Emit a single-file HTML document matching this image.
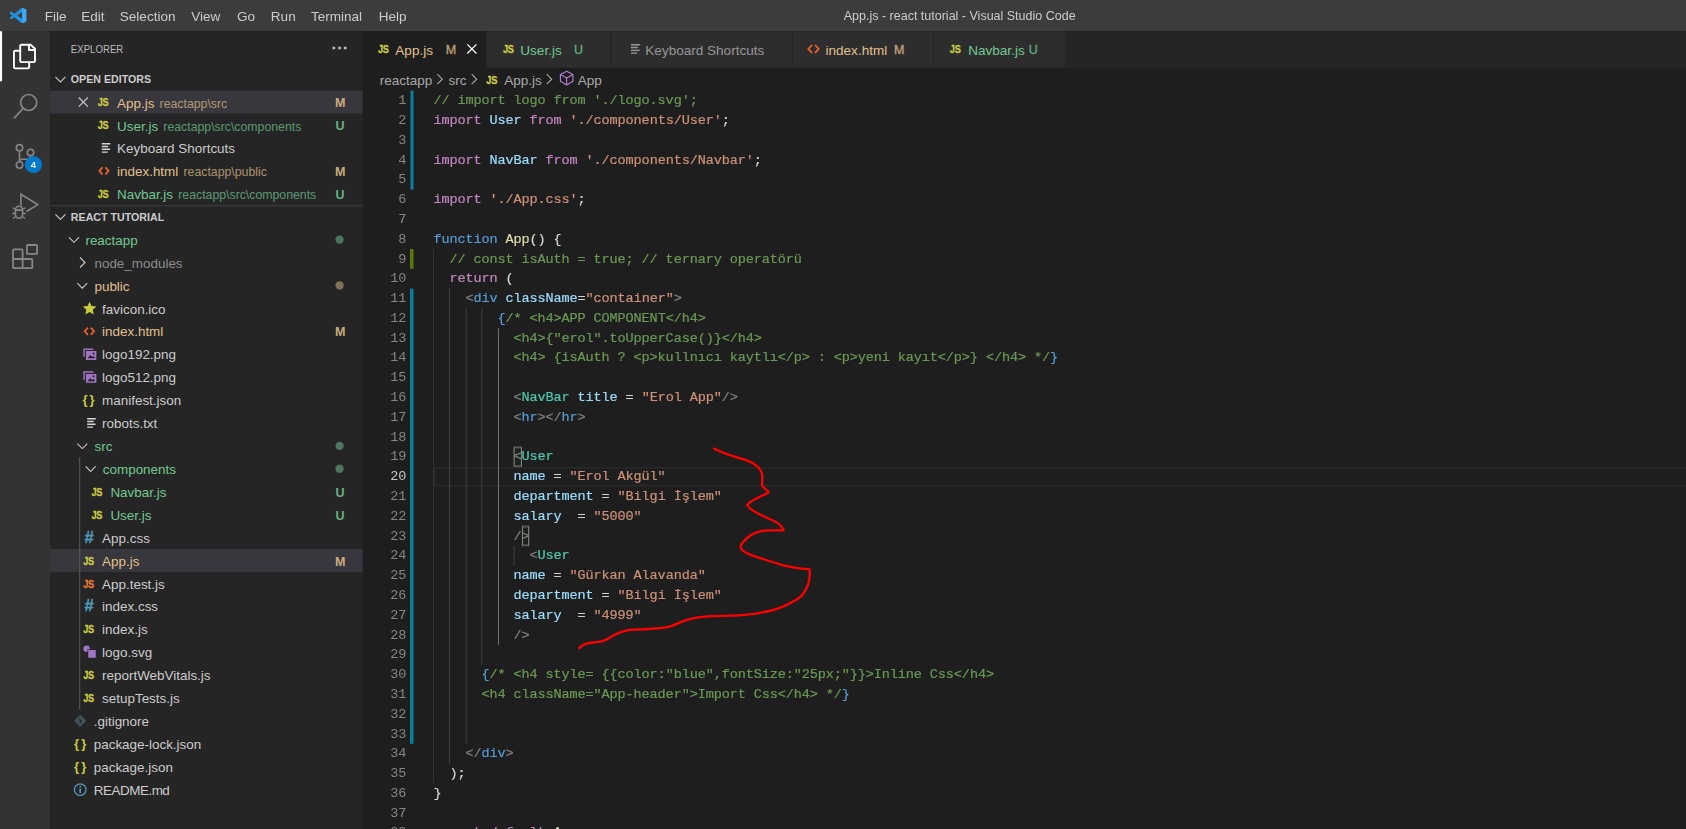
<!DOCTYPE html>
<html><head><meta charset="utf-8"><title>App.js - react tutorial - Visual Studio Code</title>
<style>
html,body{margin:0;padding:0;background:#1e1e1e;overflow:hidden;}
body{width:1686px;height:829px;position:relative;font-family:"Liberation Sans",sans-serif;}
#root{position:absolute;left:0;top:0;width:1619px;height:796px;transform:scale(1.0416667);transform-origin:0 0;overflow:visible;font-size:13px;color:#ccc;}
.ab{position:absolute;white-space:pre;}
#title{left:0;top:0;width:1700px;height:30px;background:#3c3c3c;}
.mi{top:.5px;height:30px;line-height:30px;font-size:13px;color:#cccccc;}
#act{left:0;top:30px;width:48px;height:800px;background:#333333;}
#side{left:48px;top:30px;width:300.500px;height:800px;background:#252526;overflow:hidden;}
#ed{left:348.500px;top:30px;width:1300px;height:800px;background:#1e1e1e;}
#tabs{left:0;top:0;width:1300px;height:35px;background:#252526;}
.tab{top:0;height:35px;background:#2d2d2d;box-sizing:border-box;border-right:1px solid #252526;}
.tab.on{background:#1e1e1e;}
.tl{top:1px;height:35px;line-height:35px;font-size:13px;}
.dec{opacity:.8;font-size:12px;-webkit-text-stroke:.3px}
.sbtitle{height:35px;line-height:35px;font-size:11px;color:#bbbbbb;transform:scaleX(.84);transform-origin:0 50%;}
.dots{font-size:16px;line-height:16px;color:#c5c5c5;font-weight:bold}
.phead{height:22px;line-height:22px;font-size:11px;font-weight:bold;color:#cccccc;transform:scaleX(.93);transform-origin:0 50%;}
.row{height:22px;line-height:22px;font-size:12.900px;padding-top:1.200px}
.desc{font-size:11.800px;opacity:.7;margin-left:5px;}
.badge{width:20px;text-align:center;height:22px;line-height:22px;font-size:12px;font-weight:bold;opacity:.85;padding-top:1.200px}
.sel{background:#37373d;}
.jsic{width:16px;height:16px;line-height:17px;text-align:center;font-size:10.800px;font-weight:bold;letter-spacing:-.3px;transform:scaleX(.82);-webkit-text-stroke:.3px;}
.brace{width:18px;height:18px;line-height:18px;text-align:center;font-size:12.500px;font-weight:bold;letter-spacing:2px}
.hash{width:16px;height:18px;line-height:18px;text-align:center;font-size:16px;font-weight:bold;-webkit-text-stroke:.3px;}
#bc{left:0;top:36.700px;width:1300px;height:22px;line-height:22px;font-size:13px;color:#a9a9a9;}
#code{left:0;top:57px;width:1300px;height:760px;font-family:"Liberation Mono",monospace;}
.ln{left:0;width:41.500px;text-align:right;height:19px;line-height:19px;font-size:13px;color:#858585;letter-spacing:-.1px}
.ln.act{color:#c6c6c6;}
.cl{left:67.600px;height:19px;line-height:19px;font-size:13px;letter-spacing:-.115px;color:#d4d4d4;-webkit-text-stroke:.2px;}
.cm{color:#6a9955}.kc{color:#c586c0}.kw{color:#569cd6}.v{color:#9cdcfe}.s{color:#ce9178}.f{color:#dcdcaa}.p{color:#808080}.t{color:#569cd6}.ct{color:#4ec9b0}.d{color:#d4d4d4}
.bm{box-sizing:border-box;border:1px solid #888;background:rgba(0,100,0,.1);}
</style></head><body>
<div id="root">
 <div id="title" class="ab">
  <svg class="ab" style="left:9.300px;top:6.700px" width="16.500" height="15.700" viewBox="0 0 100 100" preserveAspectRatio="none"><path d="M74 100 1 36 10 25 78 73z" fill="#1e98ea"/><path d="M74 1 1 64 9 75 78 27z" fill="#2590d8"/><path d="M74 1 99 14V86L74 100z" fill="#3daaf7"/></svg>
  <div class="ab mi" style="left:43px">File</div>
  <div class="ab mi" style="left:78px">Edit</div>
  <div class="ab mi" style="left:115px">Selection</div>
  <div class="ab mi" style="left:183.500px">View</div>
  <div class="ab mi" style="left:227.500px">Go</div>
  <div class="ab mi" style="left:260px">Run</div>
  <div class="ab mi" style="left:298.500px">Terminal</div>
  <div class="ab mi" style="left:363.500px">Help</div>
  <div class="ab mi" style="left:810px;top:-.5px;font-size:12px">App.js - react tutorial - Visual Studio Code</div>
 </div>
 <div id="act" class="ab">
  <div class="ab" style="left:0;top:0;width:2px;height:48px;background:#fff"></div>
  </div>
 <div id="side" class="ab">
<div class="ab sbtitle" style="left:20px;top:0;">EXPLORER</div>
<div class="ab dots" style="left:270px;top:8px;">&#8943;</div>
<svg class="ab" style="left:2.3000000000000007px;top:37.7px" width="16" height="16" viewBox="0 0 16 16"><path d="M3.2 5.8 8 10.6 12.8 5.8" fill="none" stroke="#c5c5c5" stroke-width="1.1"/></svg>
<div class="ab phead" style="left:20px;top:35px;">OPEN EDITORS</div>
<div class="ab sel" style="left:0;top:57px;width:300px;height:22px"></div>
<svg class="ab" style="left:24px;top:60px" width="16" height="16" viewBox="0 0 16 16"><path d="M3.6 3.6 12.4 12.4M12.4 3.6 3.6 12.4" fill="none" stroke="#c5c5c5" stroke-width="1.15"/></svg>
<span class="ab jsic" style="left:43.4px;top:60px;color:#cbcb41">JS</span>
<div class="ab row" style="left:64.400px;top:58px;color:#e2c08d">App.js<span class="desc">reactapp\src</span></div>
<div class="ab badge" style="left:268.500px;top:57px;color:#e2c08d">M</div>
<span class="ab jsic" style="left:43.4px;top:82px;color:#cbcb41">JS</span>
<div class="ab row" style="left:64.400px;top:79.5px;color:#73c991">User.js<span class="desc">reactapp\src\components</span></div>
<div class="ab badge" style="left:268.500px;top:79px;color:#73c991">U</div>
<svg class="ab" style="left:42.5px;top:104px" width="16" height="16" viewBox="0 0 16 16"><path d="M6.700 4h8.300M6.700 6.670h6.200M6.700 9.330h8M6.700 12h5.600" fill="none" stroke="#d4d7d6" stroke-width="1.350"/></svg>
<div class="ab row" style="left:64.400px;top:101px;color:#cccccc">Keyboard Shortcuts</div>
<svg class="ab" style="left:43.3px;top:126px" width="16" height="16" viewBox="0 0 16 16"><path d="M7.400 4.600 4.400 8l3 3.400M10.200 4.600 13.200 8l-3 3.400" fill="none" stroke="#e8602c" stroke-width="1.800"/></svg>
<div class="ab row" style="left:64.400px;top:123px;color:#e2c08d">index.html<span class="desc">reactapp\public</span></div>
<div class="ab badge" style="left:268.500px;top:123px;color:#e2c08d">M</div>
<span class="ab jsic" style="left:43.4px;top:148px;color:#cbcb41">JS</span>
<div class="ab row" style="left:64.400px;top:145px;color:#73c991">Navbar.js<span class="desc">reactapp\src\components</span></div>
<div class="ab badge" style="left:268.500px;top:145px;color:#73c991">U</div>
<div class="ab" style="left:0;top:167px;width:300px;height:1px;background:#3f3f42"></div>
<svg class="ab" style="left:2.3000000000000007px;top:169.7px" width="16" height="16" viewBox="0 0 16 16"><path d="M3.2 5.8 8 10.6 12.8 5.8" fill="none" stroke="#c5c5c5" stroke-width="1.1"/></svg>
<div class="ab phead" style="left:20px;top:167px;">REACT TUTORIAL</div>
<svg class="ab" style="left:15.3px;top:192px" width="16" height="16" viewBox="0 0 16 16"><path d="M3.2 5.8 8 10.6 12.8 5.8" fill="none" stroke="#c5c5c5" stroke-width="1.1"/></svg>
<div class="ab row" style="left:34px;top:189px;color:#73c991">reactapp</div>
<div class="ab" style="left:274.300px;top:195.8px;width:8.200px;height:8.200px;border-radius:50%;background:#73c991;opacity:.5"></div>
<svg class="ab" style="left:22.6px;top:214px" width="16" height="16" viewBox="0 0 16 16"><path d="M5.8 3.2 10.6 8 5.8 12.8" fill="none" stroke="#c5c5c5" stroke-width="1.1"/></svg>
<div class="ab row" style="left:42.7px;top:211px;color:#8c8c8c">node_modules</div>
<svg class="ab" style="left:23.3px;top:236px" width="16" height="16" viewBox="0 0 16 16"><path d="M3.2 5.8 8 10.6 12.8 5.8" fill="none" stroke="#c5c5c5" stroke-width="1.1"/></svg>
<div class="ab row" style="left:42.7px;top:233px;color:#e2c08d">public</div>
<div class="ab" style="left:274.300px;top:239.8px;width:8.200px;height:8.200px;border-radius:50%;background:#e2c08d;opacity:.5"></div>
<svg class="ab" style="left:29.799999999999997px;top:258px" width="16" height="16" viewBox="0 0 16 16"><path d="M8 1.6l1.9 4.1 4.5.5-3.3 3.1.9 4.5L8 11.5l-4 2.3.9-4.5L1.600 6.2l4.5-.5z" fill="#cbcb41"/></svg>
<div class="ab row" style="left:50px;top:255px;color:#cccccc">favicon.ico</div>
<svg class="ab" style="left:29px;top:280px" width="16" height="16" viewBox="0 0 16 16"><path d="M7.400 4.600 4.400 8l3 3.400M10.200 4.600 13.200 8l-3 3.400" fill="none" stroke="#e8602c" stroke-width="1.800"/></svg>
<div class="ab row" style="left:50px;top:277px;color:#e2c08d">index.html</div>
<div class="ab badge" style="left:268.500px;top:277px;color:#e2c08d">M</div>
<svg class="ab" style="left:29.7px;top:302px" width="16" height="16" viewBox="0 0 16 16"><path d="M2 2.5h9.5v1.4H3.4v6.6H2z" fill="#a074c4"/><path d="M4.5 5h10v8.500h-10z" fill="#a074c4"/><path d="M6 12l2.600-3.200 1.800 2 1.300-1.200 1.600 2.400z" fill="#252526"/><circle cx="11.800" cy="7.300" r="1" fill="#252526"/></svg>
<div class="ab row" style="left:50px;top:299px;color:#cccccc">logo192.png</div>
<svg class="ab" style="left:29.7px;top:324px" width="16" height="16" viewBox="0 0 16 16"><path d="M2 2.5h9.5v1.4H3.4v6.6H2z" fill="#a074c4"/><path d="M4.5 5h10v8.500h-10z" fill="#a074c4"/><path d="M6 12l2.600-3.200 1.800 2 1.300-1.200 1.600 2.400z" fill="#252526"/><circle cx="11.800" cy="7.300" r="1" fill="#252526"/></svg>
<div class="ab row" style="left:50px;top:321px;color:#cccccc">logo512.png</div>
<span class="ab brace" style="left:29px;top:344.5px;color:#cbcb41">{}</span>
<div class="ab row" style="left:50px;top:343px;color:#cccccc">manifest.json</div>
<svg class="ab" style="left:29px;top:368px" width="16" height="16" viewBox="0 0 16 16"><path d="M6.700 4h8.300M6.700 6.670h6.200M6.700 9.330h8M6.700 12h5.600" fill="none" stroke="#d4d7d6" stroke-width="1.350"/></svg>
<div class="ab row" style="left:50px;top:365px;color:#cccccc">robots.txt</div>
<svg class="ab" style="left:23.3px;top:390px" width="16" height="16" viewBox="0 0 16 16"><path d="M3.2 5.8 8 10.6 12.8 5.8" fill="none" stroke="#c5c5c5" stroke-width="1.1"/></svg>
<div class="ab row" style="left:42.7px;top:387px;color:#73c991">src</div>
<div class="ab" style="left:274.300px;top:393.8px;width:8.200px;height:8.200px;border-radius:50%;background:#73c991;opacity:.5"></div>
<svg class="ab" style="left:31.299999999999997px;top:412px" width="16" height="16" viewBox="0 0 16 16"><path d="M3.2 5.8 8 10.6 12.8 5.8" fill="none" stroke="#c5c5c5" stroke-width="1.1"/></svg>
<div class="ab row" style="left:50.7px;top:409px;color:#73c991">components</div>
<div class="ab" style="left:274.300px;top:415.8px;width:8.200px;height:8.200px;border-radius:50%;background:#73c991;opacity:.5"></div>
<span class="ab jsic" style="left:36.6px;top:434px;color:#cbcb41">JS</span>
<div class="ab row" style="left:58px;top:431px;color:#73c991">Navbar.js</div>
<div class="ab badge" style="left:268.500px;top:431px;color:#73c991">U</div>
<span class="ab jsic" style="left:36.6px;top:456px;color:#cbcb41">JS</span>
<div class="ab row" style="left:58px;top:453px;color:#73c991">User.js</div>
<div class="ab badge" style="left:268.500px;top:453px;color:#73c991">U</div>
<span class="ab hash" style="left:29.5px;top:477px;color:#519aba">#</span>
<div class="ab row" style="left:50px;top:475px;color:#cccccc">App.css</div>
<div class="ab sel" style="left:0;top:497px;width:300px;height:22px"></div>
<span class="ab jsic" style="left:28.6px;top:500px;color:#cbcb41">JS</span>
<div class="ab row" style="left:50px;top:497px;color:#e2c08d">App.js</div>
<div class="ab badge" style="left:268.500px;top:497px;color:#e2c08d">M</div>
<span class="ab jsic" style="left:28.6px;top:522px;color:#e37933">JS</span>
<div class="ab row" style="left:50px;top:519px;color:#cccccc">App.test.js</div>
<span class="ab hash" style="left:29.5px;top:543px;color:#519aba">#</span>
<div class="ab row" style="left:50px;top:541px;color:#cccccc">index.css</div>
<span class="ab jsic" style="left:28.6px;top:566px;color:#cbcb41">JS</span>
<div class="ab row" style="left:50px;top:563px;color:#cccccc">index.js</div>
<svg class="ab" style="left:29px;top:588px" width="16" height="16" viewBox="0 0 16 16"><circle cx="6.100" cy="4.800" r="3.100" fill="#a074c4"/><path d="M7 5.200h8.400v8.800h-8.400z" fill="#252526"/><path d="M7.700 5.900h7.200v7.600h-7.200z" fill="#a074c4"/></svg>
<div class="ab row" style="left:50px;top:585px;color:#cccccc">logo.svg</div>
<span class="ab jsic" style="left:28.6px;top:610px;color:#cbcb41">JS</span>
<div class="ab row" style="left:50px;top:607px;color:#cccccc">reportWebVitals.js</div>
<span class="ab jsic" style="left:28.6px;top:632px;color:#cbcb41">JS</span>
<div class="ab row" style="left:50px;top:629px;color:#cccccc">setupTests.js</div>
<svg class="ab" style="left:21px;top:654px" width="16" height="16" viewBox="0 0 16 16"><path d="M8 2.200 13.800 8 8 13.800 2.200 8z" fill="#41535b"/><path d="M6.500 5.500 9.500 8.500M8 7v3.500" stroke="#252526" stroke-width="1" fill="none"/></svg>
<div class="ab row" style="left:42px;top:651px;color:#cccccc">.gitignore</div>
<span class="ab brace" style="left:21px;top:674.5px;color:#cbcb41">{}</span>
<div class="ab row" style="left:42px;top:673px;color:#cccccc">package-lock.json</div>
<span class="ab brace" style="left:21px;top:696.5px;color:#cbcb41">{}</span>
<div class="ab row" style="left:42px;top:695px;color:#cccccc">package.json</div>
<svg class="ab" style="left:21px;top:720px" width="16" height="16" viewBox="0 0 16 16"><circle cx="8" cy="8" r="5.600" fill="none" stroke="#519aba" stroke-width="1.200"/><path d="M8 7v4.200" stroke="#519aba" stroke-width="1.500"/><circle cx="8" cy="5.100" r=".9" fill="#519aba"/></svg>
<div class="ab row" style="left:42px;top:717px;color:#cccccc;letter-spacing:-.45px">README.md</div>
<div class="ab" style="left:27.7px;top:409px;width:1px;height:242px;background:#585858"></div>
 </div>
 <div id="ed" class="ab">
  <div id="tabs" class="ab">
   <div class="ab tab on" style="left:0;width:118.800px"></div>
   <div class="ab tab" style="left:118.800px;width:119.900px"></div>
   <div class="ab tab" style="left:238.700px;width:173.400px"></div>
   <div class="ab tab" style="left:412.100px;width:136.700px"></div>
   <div class="ab tab" style="left:548.800px;width:126.200px"></div>
   <span class="ab jsic" style="left:11px;top:9px;color:#cbcb41">JS</span>
   <div class="ab tl" style="left:31px;color:#e2c08d">App.js</div>
   <div class="ab tl dec" style="left:79.500px;color:#e2c08d">M</div>
   <svg class="ab" style="left:96px;top:9px" width="16" height="16" viewBox="0 0 16 16"><path d="M3.600 3.600 12.400 12.400M12.400 3.600 3.600 12.400" fill="none" stroke="#fff" stroke-width="1.200"/></svg>
   <span class="ab jsic" style="left:131px;top:9px;color:#cbcb41">JS</span>
   <div class="ab tl" style="left:151px;color:#73c991">User.js</div>
   <div class="ab tl dec" style="left:202.500px;color:#73c991">U</div>
   <svg class="ab" style="left:252px;top:9px" width="16" height="16" viewBox="0 0 16 16"><path d="M4.800 4h8.800M4.800 6.670h6.400M4.800 9.330h8.400M4.800 12h5.800" fill="none" stroke="#9a9c9b" stroke-width="1.350"/></svg>
   <div class="ab tl" style="left:271px;color:#969696">Keyboard Shortcuts</div>
   <svg class="ab" style="left:424px;top:9px" width="16" height="16" viewBox="0 0 16 16"><path d="M6.600 4.200 3 8l3.600 3.800M9.400 4.200 13 8l-3.600 3.800" fill="none" stroke="#e8602c" stroke-width="1.700"/></svg>
   <div class="ab tl" style="left:444px;color:#e2c08d">index.html</div>
   <div class="ab tl dec" style="left:509.800px;color:#e2c08d">M</div>
   <span class="ab jsic" style="left:560.200px;top:9px;color:#cbcb41">JS</span>
   <div class="ab tl" style="left:581px;color:#73c991">Navbar.js</div>
   <div class="ab tl dec" style="left:639px;color:#73c991">U</div>
  </div>
  <div id="bc" class="ab">
   <div class="ab" style="left:16px;top:0">reactapp</div>
   <svg class="ab" style="left:65.800px;top:1.400px" width="16" height="16" viewBox="0 0 16 16"><path d="M5.800 3.200 10.600 8 5.800 12.800" fill="none" stroke="#a9a9a9" stroke-width="1.100"/></svg>
   <div class="ab" style="left:82px;top:0">src</div>
   <svg class="ab" style="left:98.300px;top:1.400px" width="16" height="16" viewBox="0 0 16 16"><path d="M5.800 3.200 10.600 8 5.800 12.800" fill="none" stroke="#a9a9a9" stroke-width="1.100"/></svg>
   <span class="ab jsic" style="left:115px;top:2px;color:#cbcb41">JS</span>
   <div class="ab" style="left:135.500px;top:0">App.js</div>
   <svg class="ab" style="left:170.500px;top:1.400px" width="16" height="16" viewBox="0 0 16 16"><path d="M5.800 3.200 10.600 8 5.800 12.800" fill="none" stroke="#a9a9a9" stroke-width="1.100"/></svg>
   <svg class="ab" style="left:187px;top:.7px" width="16" height="16" viewBox="0 0 16 16" fill="none" stroke="#b180d7" stroke-width="1.100" stroke-linejoin="round"><path d="M8 1.500 14 4.500V11L8 14.500 2 11V4.500z"/><path d="M2 4.500 8 7.800 14 4.500M8 7.800v6.700"/></svg>
   <div class="ab" style="left:206.200px;top:0">App</div>
  </div>
  <div id="code" class="ab">
<div class="ab" style="left:67.6px;top:361px;width:1400px;height:19px;box-sizing:border-box;border:2px solid #282828"></div>
<div class="ab" style="left:67.60px;top:152px;width:1px;height:513px;background:#404040"></div>
<div class="ab" style="left:82.97px;top:190px;width:1px;height:456px;background:#404040"></div>
<div class="ab" style="left:98.34px;top:209px;width:1px;height:418px;background:#404040"></div>
<div class="ab" style="left:113.71px;top:209px;width:1px;height:342px;background:#404040"></div>
<div class="ab" style="left:129.08px;top:228px;width:1px;height:304px;background:#707070"></div>
<div class="ab" style="left:144.45px;top:437px;width:1px;height:19px;background:#404040"></div>
<div class="ab" style="left:45.600px;top:0px;width:3px;height:95px;background:#0c7d9d"></div>
<div class="ab" style="left:45.600px;top:152px;width:3px;height:19px;background:#587c0c"></div>
<div class="ab" style="left:45.600px;top:190px;width:3px;height:437px;background:#0c7d9d"></div>
<div class="ab bm" style="left:144.45px;top:342px;width:7.685px;height:19px"></div>
<div class="ab bm" style="left:152.13px;top:418px;width:7.685px;height:19px"></div>
<div class="ab ln" style="top:0px">1</div>
<div class="ab cl" style="top:0px"><span class="cm">// import logo from './logo.svg';</span></div>
<div class="ab ln" style="top:19px">2</div>
<div class="ab cl" style="top:19px"><span class="kc">import</span><span class="v"> User </span><span class="kc">from</span><span class="s"> './components/User'</span><span class="d">;</span></div>
<div class="ab ln" style="top:38px">3</div>
<div class="ab ln" style="top:57px">4</div>
<div class="ab cl" style="top:57px"><span class="kc">import</span><span class="v"> NavBar </span><span class="kc">from</span><span class="s"> './components/Navbar'</span><span class="d">;</span></div>
<div class="ab ln" style="top:76px">5</div>
<div class="ab ln" style="top:95px">6</div>
<div class="ab cl" style="top:95px"><span class="kc">import</span><span class="s"> './App.css'</span><span class="d">;</span></div>
<div class="ab ln" style="top:114px">7</div>
<div class="ab ln" style="top:133px">8</div>
<div class="ab cl" style="top:133px"><span class="kw">function</span><span class="f"> App</span><span class="d">() {</span></div>
<div class="ab ln" style="top:152px">9</div>
<div class="ab cl" style="top:152px"><span class="cm">  // const isAuth = true; // ternary operatörü</span></div>
<div class="ab ln" style="top:171px">10</div>
<div class="ab cl" style="top:171px"><span class="kc">  return</span><span class="d"> (</span></div>
<div class="ab ln" style="top:190px">11</div>
<div class="ab cl" style="top:190px"><span class="p">    &lt;</span><span class="t">div</span><span class="v"> className</span><span class="d">=</span><span class="s">"container"</span><span class="p">&gt;</span></div>
<div class="ab ln" style="top:209px">12</div>
<div class="ab cl" style="top:209px"><span class="kw">        {</span><span class="cm">/* &lt;h4&gt;APP COMPONENT&lt;/h4&gt;</span></div>
<div class="ab ln" style="top:228px">13</div>
<div class="ab cl" style="top:228px"><span class="cm">          &lt;h4&gt;{"erol".toUpperCase()}&lt;/h4&gt;</span></div>
<div class="ab ln" style="top:247px">14</div>
<div class="ab cl" style="top:247px"><span class="cm">          &lt;h4&gt; {isAuth ? &lt;p&gt;kullnıcı kaytlı&lt;/p&gt; : &lt;p&gt;yeni kayıt&lt;/p&gt;} &lt;/h4&gt; */</span><span class="kw">}</span></div>
<div class="ab ln" style="top:266px">15</div>
<div class="ab ln" style="top:285px">16</div>
<div class="ab cl" style="top:285px"><span class="p">          &lt;</span><span class="ct">NavBar</span><span class="v"> title</span><span class="d"> = </span><span class="s">"Erol App"</span><span class="p">/&gt;</span></div>
<div class="ab ln" style="top:304px">17</div>
<div class="ab cl" style="top:304px"><span class="p">          &lt;</span><span class="t">hr</span><span class="p">&gt;&lt;/</span><span class="t">hr</span><span class="p">&gt;</span></div>
<div class="ab ln" style="top:323px">18</div>
<div class="ab ln" style="top:342px">19</div>
<div class="ab cl" style="top:342px"><span class="p">          &lt;</span><span class="ct">User</span></div>
<div class="ab ln act" style="top:361px">20</div>
<div class="ab cl" style="top:361px"><span class="v">          name</span><span class="d"> = </span><span class="s">"Erol Akgül"</span></div>
<div class="ab ln" style="top:380px">21</div>
<div class="ab cl" style="top:380px"><span class="v">          department</span><span class="d"> = </span><span class="s">"Bilgi İşlem"</span></div>
<div class="ab ln" style="top:399px">22</div>
<div class="ab cl" style="top:399px"><span class="v">          salary</span><span class="d">  = </span><span class="s">"5000"</span></div>
<div class="ab ln" style="top:418px">23</div>
<div class="ab cl" style="top:418px"><span class="p">          /&gt;</span></div>
<div class="ab ln" style="top:437px">24</div>
<div class="ab cl" style="top:437px"><span class="p">            &lt;</span><span class="ct">User</span></div>
<div class="ab ln" style="top:456px">25</div>
<div class="ab cl" style="top:456px"><span class="v">          name</span><span class="d"> = </span><span class="s">"Gürkan Alavanda"</span></div>
<div class="ab ln" style="top:475px">26</div>
<div class="ab cl" style="top:475px"><span class="v">          department</span><span class="d"> = </span><span class="s">"Bilgi İşlem"</span></div>
<div class="ab ln" style="top:494px">27</div>
<div class="ab cl" style="top:494px"><span class="v">          salary</span><span class="d">  = </span><span class="s">"4999"</span></div>
<div class="ab ln" style="top:513px">28</div>
<div class="ab cl" style="top:513px"><span class="p">          /&gt;</span></div>
<div class="ab ln" style="top:532px">29</div>
<div class="ab ln" style="top:551px">30</div>
<div class="ab cl" style="top:551px"><span class="kw">      {</span><span class="cm">/* &lt;h4 style= {{color:"blue",fontSize:"25px;"}}&gt;Inline Css&lt;/h4&gt;</span></div>
<div class="ab ln" style="top:570px">31</div>
<div class="ab cl" style="top:570px"><span class="cm">      &lt;h4 className="App-header"&gt;Import Css&lt;/h4&gt; */</span><span class="kw">}</span></div>
<div class="ab ln" style="top:589px">32</div>
<div class="ab ln" style="top:608px">33</div>
<div class="ab ln" style="top:627px">34</div>
<div class="ab cl" style="top:627px"><span class="p">    &lt;/</span><span class="t">div</span><span class="p">&gt;</span></div>
<div class="ab ln" style="top:646px">35</div>
<div class="ab cl" style="top:646px"><span class="d">  );</span></div>
<div class="ab ln" style="top:665px">36</div>
<div class="ab cl" style="top:665px"><span class="d">}</span></div>
<div class="ab ln" style="top:684px">37</div>
<div class="ab ln" style="top:703px">38</div>
<div class="ab cl" style="top:703px"><span class="kc">export default</span><span class="f"> App</span><span class="d">;</span></div>
  </div>
 </div>
</div>
<svg class="ab" style="left:0;top:0;pointer-events:none" width="1686" height="829" viewBox="0 0 1686 829">
<g fill="none" stroke="#ffffff" stroke-width="1.900" stroke-linejoin="round">
<path d="M20.200 61V46q0-1.300 1.300-1.300H30.600L35 48.700V60.800q0 1.300-1.300 1.300H21.500q-1.300 0-1.300-1.100z"/>
<path d="M29 44.700V50h6"/>
<path d="M20.200 50.700H15.200q-1.250 0-1.250 1.300V67.100q0 1.300 1.250 1.300H27.900q1.300 0 1.300-1.300V62.100"/>
</g>
<g fill="none" stroke="#868686" stroke-width="1.700">
<circle cx="28.700" cy="102.500" r="8"/><path d="M23.200 108.200 14 118.400"/>
</g>
<g fill="none" stroke="#868686" stroke-width="1.600">
<circle cx="19.500" cy="147.800" r="3.200"/><circle cx="19.500" cy="165" r="3.200"/><circle cx="30.500" cy="152.400" r="3.200"/>
<path d="M19.500 151V161.800M30.500 155.600q0 3.600-4 3.600H22.500q-3 0-3 2.600"/>
</g>
<circle cx="33.500" cy="164.500" r="8.600" fill="#007acc"/>
<text x="33.500" y="168" text-anchor="middle" font-family="Liberation Sans, sans-serif" font-size="9.500" font-weight="bold" fill="#fff">4</text>
<g fill="none" stroke="#868686" stroke-width="1.600">
<path d="M20.900 205.500V194.300L37.700 204.600 26.500 211.500"/>
<path d="M15.400 212.500v-2.500a3.600 3.800 0 0 1 7.200 0v4a3.600 4.300 0 0 1-7.200 0zM15.400 210.100h7.200"/>
<path d="M15.400 209.300 12.600 207.700M22.600 209.300 25.400 207.700M15.400 213.500H12.200M22.600 213.500H25.800M15.800 216.500 12.800 218.500M22.200 216.500 25.200 218.500" stroke-width="1.300"/>
</g>
<g fill="none" stroke="#868686" stroke-width="1.800" stroke-linejoin="round">
<path d="M13 250.300q0-1 1-1H21.600q1 0 1 1V259H31.300q1 0 1 1V267.200q0 1-1 1H14q-1 0-1-1z"/>
<path d="M13 259H22.600V268.200"/>
<rect x="27" y="245" width="10.100" height="8.900" rx="1"/>
</g>
<path d="M714 448.600 C720 452 735 457 744.500 459.700 C752 462 758 466 761 471 C764 477 761 482 762.500 486 C764 489 769 491 768.400 492.400 C762 496 750 501 747.200 504.800 C748 508 755 512 760 514.500 C766 518 776 521 779 524 C782 527 784 530 783.500 530.300 C778 530.500 768 530 763 530.800 C758 531.600 754 533 751 535 C747 538 741 543 740.500 546.700 C741 551 746 553 750 554.700 C760 558 772 562 781.600 564.800 C790 567 800 568.500 809.500 569.300 C810 574 810 579 808.200 584 C806 590 804 594 800 597.200 C793 602 785 606 776.300 609.100 C766 612 756 614 744.500 614.900 C732 616 720 616 707.400 616.300 C698 617 690 618.500 682.700 621.400 C676 624 672 626.500 666 627.300 C660 628.200 654 628.500 648.300 629 C641 629.500 634 629 628 630.200 C622 631.500 618 633 614 635 C610 637.500 607 640 602 641.300 C596 642.500 590 642.500 585.400 643.900 C583 645 581 646.500 579.200 648" fill="none" stroke="#ff0000" stroke-width="2.300" stroke-linecap="round" stroke-linejoin="round"/></svg>
</body></html>
